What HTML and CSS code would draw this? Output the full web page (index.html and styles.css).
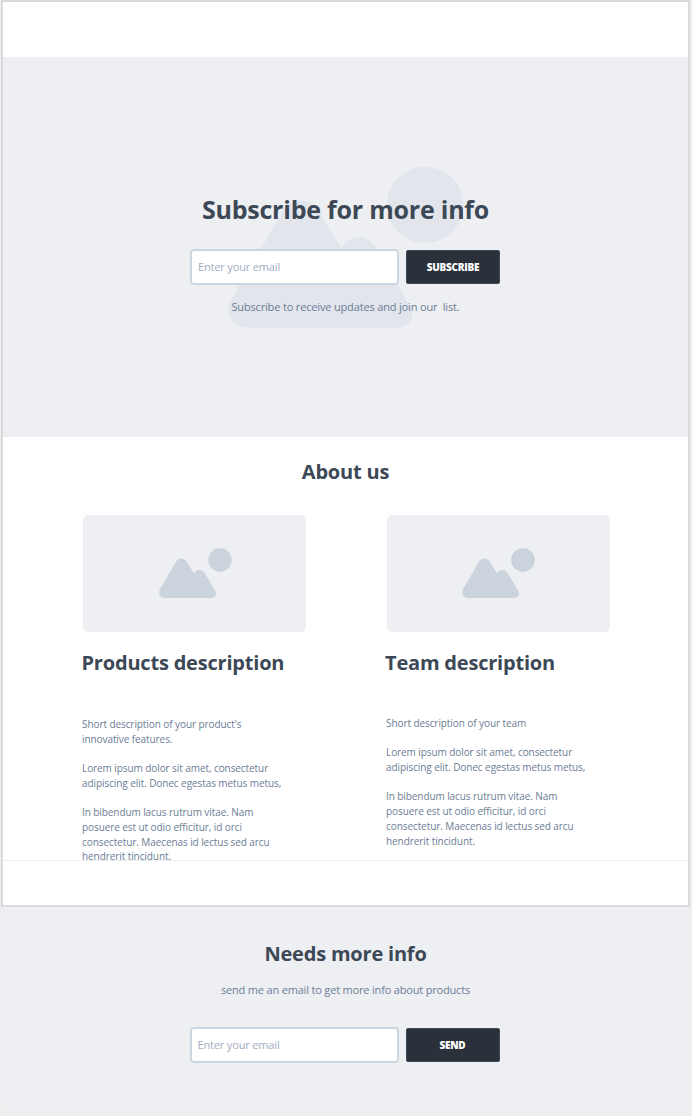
FILE: index.html
```html
<!DOCTYPE html>
<html lang="en">
<head>
<meta charset="utf-8">
<title>Subscribe</title>
<link rel="stylesheet" href="styles.css">
</head>
<body>
<svg class="defs" width="0" height="0" aria-hidden="true">
  <symbol id="picture" viewBox="0 0 73 50">
    <circle cx="61" cy="12" r="11.8"/>
    <path d="M7 50C1.2 50-1.2 45.8 1 41.2L16.6 14.6C19.2 9.4 25.2 9.4 28 14L35.1 25.4C37.8 21 42.8 20.8 45.6 24.9L56 42.6C58.2 46.6 56.4 50 52 50Z"/>
  </symbol>
</svg>
<main class="frame">
  <header class="topbar"></header>
  <section class="hero">
    <svg class="hero-art" aria-hidden="true"><use href="#picture"/></svg>
    <h1 class="hero-title">Subscribe for more info</h1>
    <form class="form">
      <input class="field" type="email" placeholder="Enter your email">
      <button class="button" type="button">SUBSCRIBE</button>
    </form>
    <p class="hero-note">Subscribe to receive updates and join our&nbsp; list.</p>
  </section>
  <section class="about">
    <h2 class="about-title">About us</h2>
    <div class="columns">
      <article class="card">
        <div class="thumb"><svg class="thumb-art" aria-hidden="true"><use href="#picture"/></svg></div>
        <h3 class="card-title">Products description</h3>
        <div class="copy copy-products">
          <p>Short description of your product's<br>innovative features.</p>
          <p>Lorem ipsum dolor sit amet, consectetur<br>adipiscing elit. Donec egestas metus metus,</p>
          <p>In bibendum lacus rutrum vitae. Nam<br>posuere est ut odio efficitur, id orci<br>consectetur. Maecenas id lectus sed arcu<span class="last-line">hendrerit tincidunt.</span></p>
        </div>
      </article>
      <article class="card">
        <div class="thumb"><svg class="thumb-art" aria-hidden="true"><use href="#picture"/></svg></div>
        <h3 class="card-title">Team description</h3>
        <div class="copy">
          <p>Short description of your team</p>
          <p>Lorem ipsum dolor sit amet, consectetur<br>adipiscing elit. Donec egestas metus metus,</p>
          <p>In bibendum lacus rutrum vitae. Nam<br>posuere est ut odio efficitur, id orci<br>consectetur. Maecenas id lectus sed arcu<br>hendrerit tincidunt.</p>
        </div>
      </article>
    </div>
  </section>
  <div class="bottombar"></div>
</main>
<footer class="contact">
  <h2 class="contact-title">Needs more info</h2>
  <p class="contact-note">send me an email to get more info about products</p>
  <form class="form">
    <input class="field" type="email" placeholder="Enter your email">
    <button class="button" type="button">SEND</button>
  </form>
</footer>
</body>
</html>
```
FILE: styles.css
```css
* { box-sizing: border-box; }
body { margin: 0; background: #eee; font-family: "Open Sans", sans-serif; color: #3d4856; }
h1, h2, h3, p { margin: 0; font-weight: 700; white-space: nowrap; letter-spacing: -0.2px; }
p { font-weight: 400; color: #6c7d96; }
.defs { display: block; }
.frame { width: 689px; height: 907px; margin-left: 1px; border: 2px solid #dadadc; background: #fff; }
.topbar { height: 55px; }
.hero { position: relative; height: 380px; padding-top: 134px; background: #eeeff3; display: flex; flex-direction: column; align-items: center; }
.hero-art { position: absolute; left: 225px; top: 109px; width: 236px; height: 162px; fill: #e2e5ec; }
.hero-title { position: relative; font-size: 25px; line-height: 36px; letter-spacing: -0.22px; }
.form { position: relative; display: flex; gap: 7px; align-items: center; }
.hero .form { margin: 22px 1px 0 0; }
.field { width: 209px; height: 36px; padding: 0 6px 2px; border: 2px solid #cbd5e0; border-radius: 4px; background: #fff; font: 11px/16px "Open Sans", sans-serif; letter-spacing: -0.16px; }
.field::placeholder { color: #a0aec0; opacity: 1; }
.button { width: 94px; height: 34px; padding: 0; border: 1px solid #3d4856; border-radius: 2px; background: #2b313b; color: #fff; font: 800 10px/16px "Open Sans", sans-serif; letter-spacing: -0.25px; }
.hero-note { position: relative; margin-top: 14px; font-size: 11px; line-height: 16px; letter-spacing: -0.16px; }
.about { height: 423px; padding-top: 20px; }
.about-title { font-size: 20px; line-height: 30px; text-align: center; }
.columns { display: grid; grid-template-columns: 223px 223.5px; column-gap: 80.5px; padding-left: 80px; margin-top: 28px; }
.thumb { height: 116.5px; border-radius: 5px; background: #eeeff3; display: flex; padding: 33px 0 0 75.5px; }
.thumb-art { width: 73px; height: 50px; fill: #cbd3dd; }
.card-title { margin: 16.5px 0 0 -1.5px; font-size: 20px; line-height: 30px; }
.copy { margin: 38px 0 0 -0.5px; display: grid; gap: 14px; }
.copy-products { margin-top: 39px; margin-left: -1px; }
.copy p { font-size: 10px; line-height: 15px; letter-spacing: -0.08px; }
.last-line { display: block; margin-top: -1px; }
.bottombar { position: relative; height: 45px; border-top: 1px solid #eeeff3; background: #fff; }
.contact { width: 687px; height: 202px; margin-left: 2px; padding-top: 32px; background: #eeeff3; display: flex; flex-direction: column; align-items: center; }
.contact-title { font-size: 20px; line-height: 30px; }
.contact-note { margin-top: 13px; font-size: 11px; line-height: 16px; letter-spacing: -0.18px; }
.contact .form { margin: 29px 2px 0 0; }
```
